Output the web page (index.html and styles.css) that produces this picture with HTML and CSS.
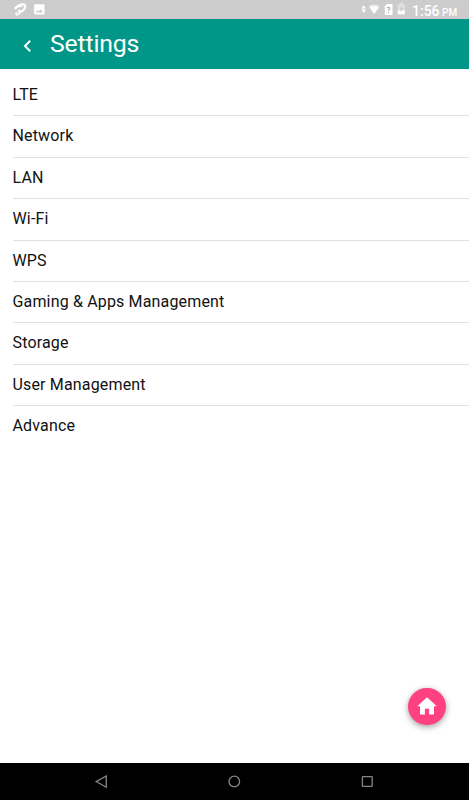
FILE: index.html
```html
<!DOCTYPE html>
<html lang="en">
<head>
<meta charset="utf-8">
<title>Settings</title>
<link rel="stylesheet" href="styles.css">
</head>
<body>
<div class="screen">
  <div class="status">
    <svg class="status-left" width="50" height="19" viewBox="0 0 50 19" fill="none" stroke="#fff" stroke-linecap="round">
      <path d="M15.3 8.2C17.8 5.3 21.8 3.6 23.9 4.5C26.6 5.8 25.1 9.6 21 11.6C19.5 12.3 18.4 11.6 19.3 10.5" stroke-width="2.1"/>
      <path d="M15.5 8.4C18 6.7 21 5.7 21.8 6.5" stroke-width="1.6"/>
      <path d="M16.4 12.8C15.3 14.3 16.4 15.1 17.7 14.5C18.8 14 19.8 13.2 20.3 12.4" stroke-width="1.5"/>
      <path fill="#fff" stroke="none" fill-rule="evenodd" d="M35.4 4.2h7.8q1.3 0 1.3 1.3v7.8q0 1.3-1.3 1.3h-7.8q-1.3 0-1.3-1.3V5.5q0-1.3 1.3-1.3zM35.6 12.6h7.4l-2.4-3.3-1.8 2.3-1.3-1.6z"/>
    </svg>
    <svg class="status-right" width="50" height="19" viewBox="0 0 50 19" fill="#fff">
      <path d="M2.4 8.6L4.7 5.2 7 8.6zM2.4 9.6L4.7 13 7 9.6z"/>
      <path d="M9.4 6.7Q15.2 2.2 20.9 6.7L15.2 9z" opacity=".6"/>
      <path d="M10.6 7.5Q15.2 5.3 19.8 7.5L15.2 13.9z"/>
      <path d="M28 4h4.5q1 0 1 1v9q0 1-1 1h-5.7q-1 0-1-1V6.3z"/>
      <path d="M27.9 8.5Q28 7.3 29.5 7.3C31.5 7.3 31.2 8.8 30.2 9.5Q29.5 10 29.5 10.9M29.5 12v1.2" fill="none" stroke="#b5b5b5" stroke-width="1.2"/>
      <path d="M40.8 2.8h3v1.4h2.1v6h-7.2v-6h2.1z" opacity=".4"/>
      <path d="M38.7 10.2h2.9v1.8l1.2-1.8h3.1v4h-7.2z"/>
      <path d="M42.7 5.6l-2.3 4h1.5v2.1l2.4-3.8h-1.6z" fill="#ccc"/>
    </svg>
    <div class="clock">1:56 <span>PM</span></div>
  </div>
  <header class="bar">
    <svg class="back" width="10" height="14" viewBox="0 0 10 14"><path d="M8.2 1.8L3 7l5.2 5.2" fill="none" stroke="#fff" stroke-width="2"/></svg>
    <h1>Settings</h1>
  </header>
  <main>
    <ul class="list">
      <li>LTE</li>
      <li>Network</li>
      <li>LAN</li>
      <li>Wi-Fi</li>
      <li>WPS</li>
      <li>Gaming &amp; Apps Management</li>
      <li>Storage</li>
      <li>User Management</li>
      <li>Advance</li>
    </ul>
    <div class="fab"><svg width="20" height="18" viewBox="0 0 20 18"><path fill="#fff" d="M10 .3L19.8 9.2H17v8.4h-4.9v-5.8H7.9v5.8H3V9.2H.2z"/></svg></div>
  </main>
  <nav class="nav">
    <svg width="14" height="14" viewBox="0 0 14 14"><path d="M12.3 1v11.2L2.2 6.6z"/></svg>
    <svg width="14" height="14" viewBox="0 0 14 14"><circle cx="7.3" cy="6.5" r="5.3"/></svg>
    <svg width="14" height="14" viewBox="0 0 14 14"><rect x="2.4" y="1.6" width="9.8" height="9.8" rx=".4"/></svg>
  </nav>
</div>
</body>
</html>
```
FILE: styles.css
```css
* { box-sizing: border-box; }
body { margin: 0; font-family: Roboto, sans-serif; background: #fff; }
.screen { height: 800px; display: flex; flex-direction: column; overflow: hidden; }
.status { height: 19px; flex: none; background: #ccc; display: flex; color: #fff; }
.status-left, .status-right { display: block; flex: none; }
.status-right { margin-left: auto; }
.clock { width: 60px; padding-left: 3px; font-size: 14px; line-height: 22px; font-weight: 500; white-space: nowrap; }
.clock span { font-size: 10px; margin-left: -1px; }
.bar { height: 49.5px; flex: none; background: #009788; display: flex; align-items: center; color: #fff; }
.back { margin: 4px 0 0 22px; }
h1 { margin: 0 0 0 18px; font-size: 24.8px; line-height: 49px; font-weight: 400; letter-spacing: -.18px; }
main { position: relative; flex: 1; padding: 6.6px 0 0 12.5px; }
.list { list-style: none; margin: 0; padding: 0; }
.list li { height: 41.4px; line-height: 40px; font-size: 16px; letter-spacing: .16px; color: #111; border-bottom: 1px solid #e0e0e0; }
.list li:last-child { border-bottom: 0; }
.fab { position: absolute; right: 23.5px; bottom: 38px; width: 37.5px; height: 37.5px; border-radius: 50%; background: #ff4081; display: flex; align-items: center; justify-content: center; box-shadow: 0 2px 6px rgba(0,0,0,.38); }
.nav { height: 37px; flex: none; background: #000; display: flex; justify-content: space-between; align-items: center; padding: 0 95px 0 94px; }
.nav svg { fill: none; stroke: #858585; stroke-width: 1.3; }
```
